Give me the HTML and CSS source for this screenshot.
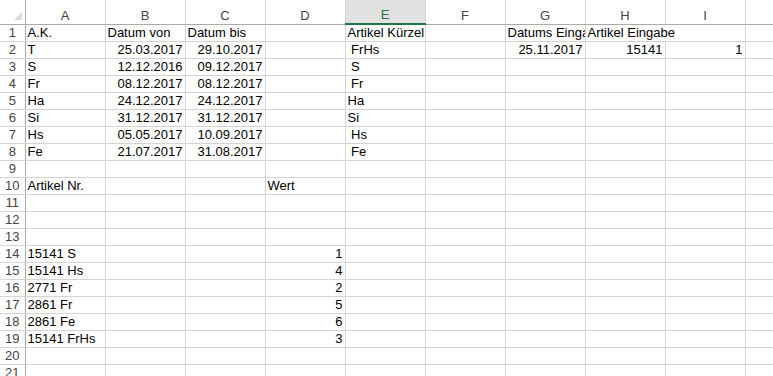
FILE: index.html
```html
<!DOCTYPE html>
<html lang="de">
<head>
  <meta charset="UTF-8" />
  <title>Mappe1 - Excel</title>
  <link rel="stylesheet" href="styles.css">
</head>
<body>

<table class="sheet">
  <colgroup>
    <col class="rh">
    <col class="c"><col class="c"><col class="c"><col class="c"><col class="c">
    <col class="c"><col class="c"><col class="c"><col class="c">
    <col class="cj">
  </colgroup>
  <thead>
    <tr>
      <th class="corner"><span class="tri"></span></th>
      <th>A</th><th>B</th><th>C</th><th>D</th><th class="sel">E</th>
      <th>F</th><th>G</th><th>H</th><th>I</th><th></th>
    </tr>
  </thead>
  <tbody>
    <tr><td class="num">1</td><td>A.K.</td><td>Datum von</td><td>Datum bis</td><td></td><td>Artikel Kürzel</td><td></td><td class="clip">Datums Eingabe</td><td class="spill">Artikel Eingabe</td><td></td><td></td></tr>
    <tr><td class="num">2</td><td>T</td><td class="n">25.03.2017</td><td class="n">29.10.2017</td><td></td><td> FrHs</td><td></td><td class="n">25.11.2017</td><td class="n">15141</td><td class="n">1</td><td></td></tr>
    <tr><td class="num">3</td><td>S</td><td class="n">12.12.2016</td><td class="n">09.12.2017</td><td></td><td> S</td><td></td><td></td><td></td><td></td><td></td></tr>
    <tr><td class="num">4</td><td>Fr</td><td class="n">08.12.2017</td><td class="n">08.12.2017</td><td></td><td> Fr</td><td></td><td></td><td></td><td></td><td></td></tr>
    <tr><td class="num">5</td><td>Ha</td><td class="n">24.12.2017</td><td class="n">24.12.2017</td><td></td><td>Ha</td><td></td><td></td><td></td><td></td><td></td></tr>
    <tr><td class="num">6</td><td>Si</td><td class="n">31.12.2017</td><td class="n">31.12.2017</td><td></td><td>Si</td><td></td><td></td><td></td><td></td><td></td></tr>
    <tr><td class="num">7</td><td>Hs</td><td class="n">05.05.2017</td><td class="n">10.09.2017</td><td></td><td> Hs</td><td></td><td></td><td></td><td></td><td></td></tr>
    <tr><td class="num">8</td><td>Fe</td><td class="n">21.07.2017</td><td class="n">31.08.2017</td><td></td><td> Fe</td><td></td><td></td><td></td><td></td><td></td></tr>
    <tr><td class="num">9</td><td></td><td></td><td></td><td></td><td></td><td></td><td></td><td></td><td></td><td></td></tr>
    <tr><td class="num">10</td><td>Artikel Nr.</td><td></td><td></td><td>Wert</td><td></td><td></td><td></td><td></td><td></td><td></td></tr>
    <tr><td class="num">11</td><td></td><td></td><td></td><td></td><td></td><td></td><td></td><td></td><td></td><td></td></tr>
    <tr><td class="num">12</td><td></td><td></td><td></td><td></td><td></td><td></td><td></td><td></td><td></td><td></td></tr>
    <tr><td class="num">13</td><td></td><td></td><td></td><td></td><td></td><td></td><td></td><td></td><td></td><td></td></tr>
    <tr><td class="num">14</td><td>15141 S</td><td></td><td></td><td class="n">1</td><td></td><td></td><td></td><td></td><td></td><td></td></tr>
    <tr><td class="num">15</td><td>15141 Hs</td><td></td><td></td><td class="n">4</td><td></td><td></td><td></td><td></td><td></td><td></td></tr>
    <tr><td class="num">16</td><td>2771 Fr</td><td></td><td></td><td class="n">2</td><td></td><td></td><td></td><td></td><td></td><td></td></tr>
    <tr><td class="num">17</td><td>2861 Fr</td><td></td><td></td><td class="n">5</td><td></td><td></td><td></td><td></td><td></td><td></td></tr>
    <tr><td class="num">18</td><td>2861 Fe</td><td></td><td></td><td class="n">6</td><td></td><td></td><td></td><td></td><td></td><td></td></tr>
    <tr><td class="num">19</td><td>15141 FrHs</td><td></td><td></td><td class="n">3</td><td></td><td></td><td></td><td></td><td></td><td></td></tr>
    <tr><td class="num">20</td><td></td><td></td><td></td><td></td><td></td><td></td><td></td><td></td><td></td><td></td></tr>
    <tr><td class="num">21</td><td></td><td></td><td></td><td></td><td></td><td></td><td></td><td></td><td></td><td></td></tr>
  </tbody>
</table>

</body>
</html>
```

FILE: styles.css
```css
* {
  box-sizing: border-box;
}

body {
  margin: 0;
  background: #fff;
  font-family: 'Liberation Sans', Arial, sans-serif;
  overflow: hidden;
}

.sheet {
  border-collapse: collapse;
  table-layout: fixed;
  width: 773px;
  font-size: 13px;
  color: #000;
}

.sheet col.rh {
  width: 25px;
}

.sheet col.c {
  width: 80px;
}

.sheet col.cj {
  width: 28px;
}

.sheet th {
  height: 24px;
  padding: 0;
  font-weight: normal;
  font-size: 13px;
  line-height: 16px;
  color: #444;
  vertical-align: bottom;
  text-align: center;
  border-right: 1px solid #d4d4d4;
  border-bottom: 1px solid #ababab;
}

.sheet th.corner {
  position: relative;
  border-right: 1px solid #ababab;
}

.tri {
  position: absolute;
  right: 3px;
  bottom: 4px;
  width: 0;
  height: 0;
  border-left: 8px solid transparent;
  border-bottom: 8px solid #dadada;
}

.sheet th.sel {
  background: #e1e1e1;
  color: #217346;
  border-bottom: 2px solid #217346;
}

.sheet td {
  height: 17px;
  padding: 0 2px;
  line-height: 16px;
  white-space: pre;
  vertical-align: bottom;
  border-right: 1px solid #d4d4d4;
  border-bottom: 1px solid #d4d4d4;
}

.sheet td.num {
  padding: 0;
  text-align: center;
  color: #444;
  border-right: 1px solid #ababab;
}

.sheet td.n {
  text-align: right;
}

.sheet td.clip {
  overflow: hidden;
}

.sheet td.spill {
  border-right-color: transparent;
}
```
